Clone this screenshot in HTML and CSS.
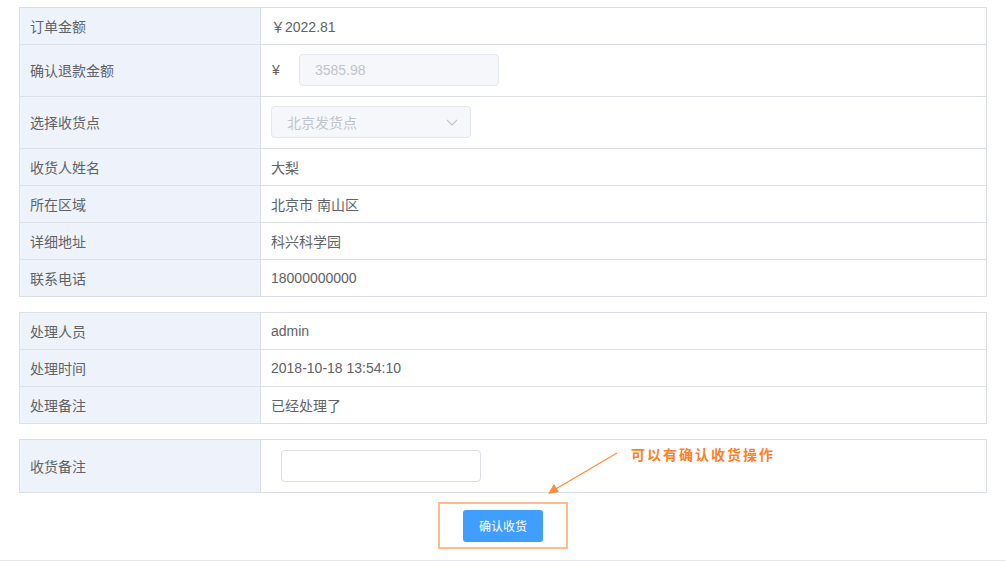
FILE: index.html
```html
<!DOCTYPE html>
<html lang="zh-CN">
<head>
  <meta charset="UTF-8" />
  <title>收货确认</title>
  <link rel="stylesheet" href="styles.css">
</head>
<body>
  <div class="page">
    <div class="info-table">
      <div class="row">
        <div class="label">订单金额</div>
        <div class="value">￥2022.81</div>
      </div>
      <div class="row tall">
        <div class="label">确认退款金额</div>
        <div class="value">
          <span class="currency">¥</span>
          <input class="field disabled" type="text" value="3585.98" disabled>
        </div>
      </div>
      <div class="row tall">
        <div class="label">选择收货点</div>
        <div class="value">
          <div class="select disabled">
            <span>北京发货点</span>
            <svg class="chevron" width="12" height="7" viewBox="0 0 12 7"><path d="M1 1 L6 6 L11 1" fill="none" stroke="#c0c4cc" stroke-width="1.2"/></svg>
          </div>
        </div>
      </div>
      <div class="row">
        <div class="label">收货人姓名</div>
        <div class="value">大梨</div>
      </div>
      <div class="row">
        <div class="label">所在区域</div>
        <div class="value">北京市 南山区</div>
      </div>
      <div class="row">
        <div class="label">详细地址</div>
        <div class="value">科兴科学园</div>
      </div>
      <div class="row">
        <div class="label">联系电话</div>
        <div class="value">18000000000</div>
      </div>
    </div>

    <div class="info-table">
      <div class="row">
        <div class="label">处理人员</div>
        <div class="value">admin</div>
      </div>
      <div class="row">
        <div class="label">处理时间</div>
        <div class="value">2018-10-18 13:54:10</div>
      </div>
      <div class="row">
        <div class="label">处理备注</div>
        <div class="value">已经处理了</div>
      </div>
    </div>

    <div class="info-table">
      <div class="row remark">
        <div class="label">收货备注</div>
        <div class="value">
          <input class="field" type="text">
        </div>
      </div>
    </div>

    <div class="actions">
      <div class="highlight">
        <button class="btn-primary">确认收货</button>
      </div>
    </div>

    <svg class="note-arrow" width="90" height="60" viewBox="0 0 90 60">
      <line x1="77" y1="8" x2="14" y2="45" stroke="#ff8c3a" stroke-width="1.2"/>
      <polygon points="8,49 14,39 19,47" fill="#ff8c3a"/>
    </svg>
    <div class="note">可以有确认收货操作</div>
  </div>
</body>
</html>
```

FILE: styles.css
```css
html, body {
  margin: 0;
  padding: 0;
  background: #fff;
}

body {
  font-family: "Liberation Sans", "Noto Sans CJK SC", sans-serif;
  font-size: 14px;
  color: #606266;
}

.page {
  position: relative;
  padding: 7px 19px 0;
}

.info-table {
  border: 1px solid #dcdfe6;
  border-bottom: none;
  margin-bottom: 15px;
}

.row {
  display: flex;
  height: 36px;
  border-bottom: 1px solid #dcdfe6;
}

.row.tall {
  height: 51px;
}

.row.remark {
  height: 52px;
}

.label {
  width: 230px;
  flex: none;
  padding-left: 10px;
  padding-bottom: 1px;
  background: #eef3fb;
  border-right: 1px solid #dcdfe6;
  display: flex;
  align-items: center;
}

.value {
  flex: 1;
  padding-left: 10px;
  padding-bottom: 1px;
  display: flex;
  align-items: center;
}

.currency {
  width: 27px;
  padding-left: 1px;
}

.field {
  box-sizing: border-box;
  width: 200px;
  height: 32px;
  border: 1px solid #dcdfe6;
  border-radius: 4px;
  padding: 0 15px;
  font-family: inherit;
  font-size: 14px;
  color: #606266;
  background: #fff;
  outline: none;
}

.remark .value {
  padding-left: 20px;
}

.field.disabled {
  background: #f5f7fa;
  border-color: #e4e7ed;
  color: #c0c4cc;
}

.select {
  box-sizing: border-box;
  width: 200px;
  height: 32px;
  border: 1px solid #e4e7ed;
  border-radius: 4px;
  background: #f5f7fa;
  color: #c0c4cc;
  padding: 0 12px 0 15px;
  display: flex;
  align-items: center;
  justify-content: space-between;
}

.actions {
  display: flex;
  justify-content: center;
  margin: -7px -19px 0;
  padding: 1px 0 11px;
  border-bottom: 1px solid #e4e7ed;
}

.highlight {
  box-sizing: border-box;
  width: 130px;
  height: 47px;
  border: 2px solid #ffbb8c;
  display: flex;
  align-items: center;
  justify-content: center;
}

.btn-primary {
  width: 80px;
  height: 32px;
  border: none;
  border-radius: 3px;
  background: #409eff;
  color: #fff;
  font-family: inherit;
  font-size: 12px;
  cursor: pointer;
}

.note {
  position: absolute;
  left: 631px;
  top: 444px;
  color: #ff7f24;
  font-weight: bold;
  font-size: 14px;
  letter-spacing: 2px;
}

.note-arrow {
  position: absolute;
  left: 540px;
  top: 445px;
}
```
